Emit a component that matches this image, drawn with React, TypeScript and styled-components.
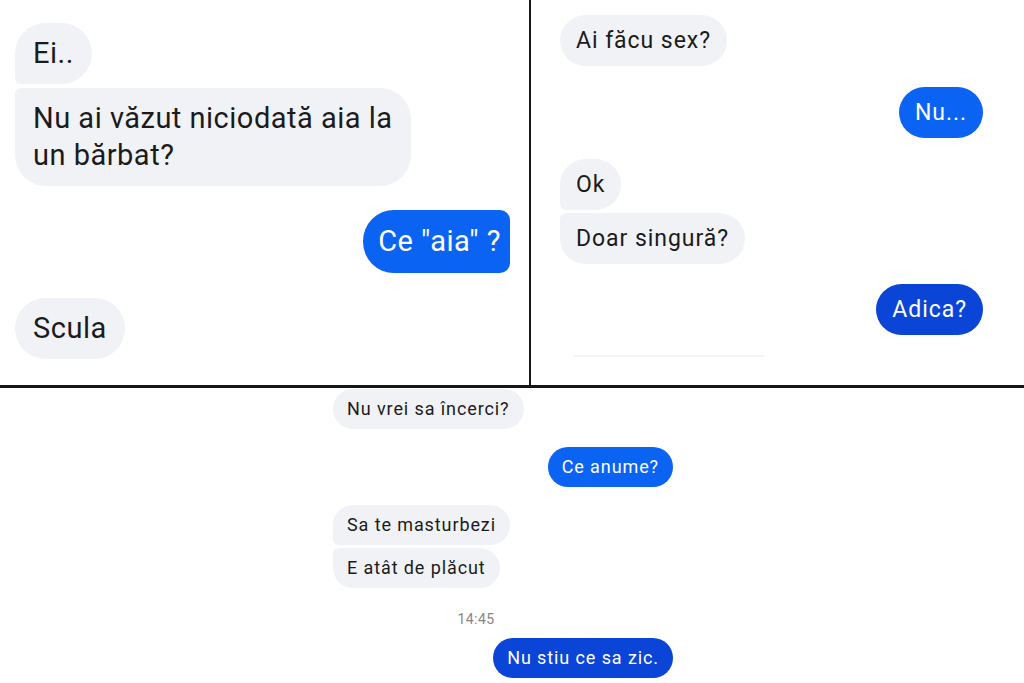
import React from "react";
import styled, { createGlobalStyle, css } from "styled-components";

const Global = createGlobalStyle`
  html, body {
    margin: 0;
    padding: 0;
    background: #ffffff;
  }
  body {
    font-family: Roboto, "Noto Sans", "Liberation Sans", sans-serif;
    -webkit-font-smoothing: antialiased;
  }
`;

const Page = styled.div`
  width: 1024px;
  height: 683px;
  display: flex;
  flex-direction: column;
  background: #fff;
  overflow: hidden;
`;

const TopRow = styled.div`
  height: 385px;
  display: grid;
  grid-template-columns: 531px 1fr;
  border-bottom: 3px solid #161616;
  flex-shrink: 0;
`;

const Panel = styled.div<{ $divider?: boolean }>`
  display: flex;
  flex-direction: column;
  overflow: hidden;
  ${(p) =>
    p.$divider &&
    css`
      border-right: 2px solid #161616;
    `}
`;

const LeftPanel = styled(Panel)`
  padding: 23px 19px 0 15px;
`;

const RightPanel = styled(Panel)`
  padding: 15px 41px 0 29px;
`;

const BottomPanel = styled.div`
  flex: 1;
  display: flex;
  flex-direction: column;
  padding: 1px 351px 0 333px;
`;

type Size = "lg" | "md" | "sm";
type Corner = "first" | "last" | "flat-right" | undefined;

const sizes = {
  lg: css`
    font-size: 29px;
    letter-spacing: 0.5px;
    line-height: 37px;
    padding: 12px 18px;
    border-radius: 31px;
  `,
  md: css`
    font-size: 23px;
    letter-spacing: 0.95px;
    line-height: 29px;
    padding: 11px 16px;
    border-radius: 26px;
  `,
  sm: css`
    font-size: 18px;
    letter-spacing: 0.9px;
    line-height: 22px;
    padding: 9px 14px;
    border-radius: 20px;
  `,
};

const Bubble = styled.div<{
  $mine?: boolean;
  $dark?: boolean;
  $size: Size;
  $corner?: Corner;
  $gap?: number;
}>`
  width: fit-content;
  white-space: nowrap;
  margin-top: ${(p) => p.$gap ?? 0}px;
  align-self: ${(p) => (p.$mine ? "flex-end" : "flex-start")};
  background: ${(p) => (p.$mine ? (p.$dark ? "#0a45d8" : "#0b63f3") : "#f1f2f6")};
  color: ${(p) => (p.$mine ? "#ffffff" : "#1b1b1d")};
  ${(p) => sizes[p.$size]}
  ${(p) =>
    p.$corner === "first" &&
    css`
      border-bottom-left-radius: 6px;
    `}
  ${(p) =>
    p.$corner === "last" &&
    css`
      border-top-left-radius: 6px;
    `}
  ${(p) =>
    p.$corner === "flat-right" &&
    css`
      border-top-right-radius: 10px;
      border-bottom-right-radius: 10px;
      padding: 13px 9px 13px 15px;
    `}
`;

const FaintRule = styled.div`
  margin: 20px 0 0 14px;
  width: 190px;
  height: 2px;
  background: #f3f3f5;
`;

const Time = styled.div`
  align-self: center;
  margin: 21px 0 9px 0;
  font-size: 14px;
  letter-spacing: 0.4px;
  line-height: 20px;
  color: #858585;
  transform: translateX(-27px);
`;

export default function App() {
  return (
    <Page>
      <Global />
      <TopRow>
        <LeftPanel $divider>
          <Bubble $size="lg" $corner="first">
            Ei..
          </Bubble>
          <Bubble $size="lg" $corner="last" $gap={4}>
            Nu ai văzut niciodată aia la
            <br />
            un bărbat?
          </Bubble>
          <Bubble $size="lg" $mine $corner="flat-right" $gap={24}>
            Ce "aia" ?
          </Bubble>
          <Bubble $size="lg" $gap={25}>
            Scula
          </Bubble>
        </LeftPanel>
        <RightPanel>
          <Bubble $size="md">Ai făcu sex?</Bubble>
          <Bubble $size="md" $mine $gap={21}>
            Nu...
          </Bubble>
          <Bubble $size="md" $corner="first" $gap={21}>
            Ok
          </Bubble>
          <Bubble $size="md" $corner="last" $gap={3}>
            Doar singură?
          </Bubble>
          <Bubble $size="md" $mine $dark $gap={20}>
            Adica?
          </Bubble>
          <FaintRule />
        </RightPanel>
      </TopRow>
      <BottomPanel>
        <Bubble $size="sm">Nu vrei sa încerci?</Bubble>
        <Bubble $size="sm" $mine $gap={18}>
          Ce anume?
        </Bubble>
        <Bubble $size="sm" $corner="first" $gap={18}>
          Sa te masturbezi
        </Bubble>
        <Bubble $size="sm" $corner="last" $gap={3}>
          E atât de plăcut
        </Bubble>
        <Time>14:45</Time>
        <Bubble $size="sm" $mine $dark>
          Nu stiu ce sa zic.
        </Bubble>
      </BottomPanel>
    </Page>
  );
}
